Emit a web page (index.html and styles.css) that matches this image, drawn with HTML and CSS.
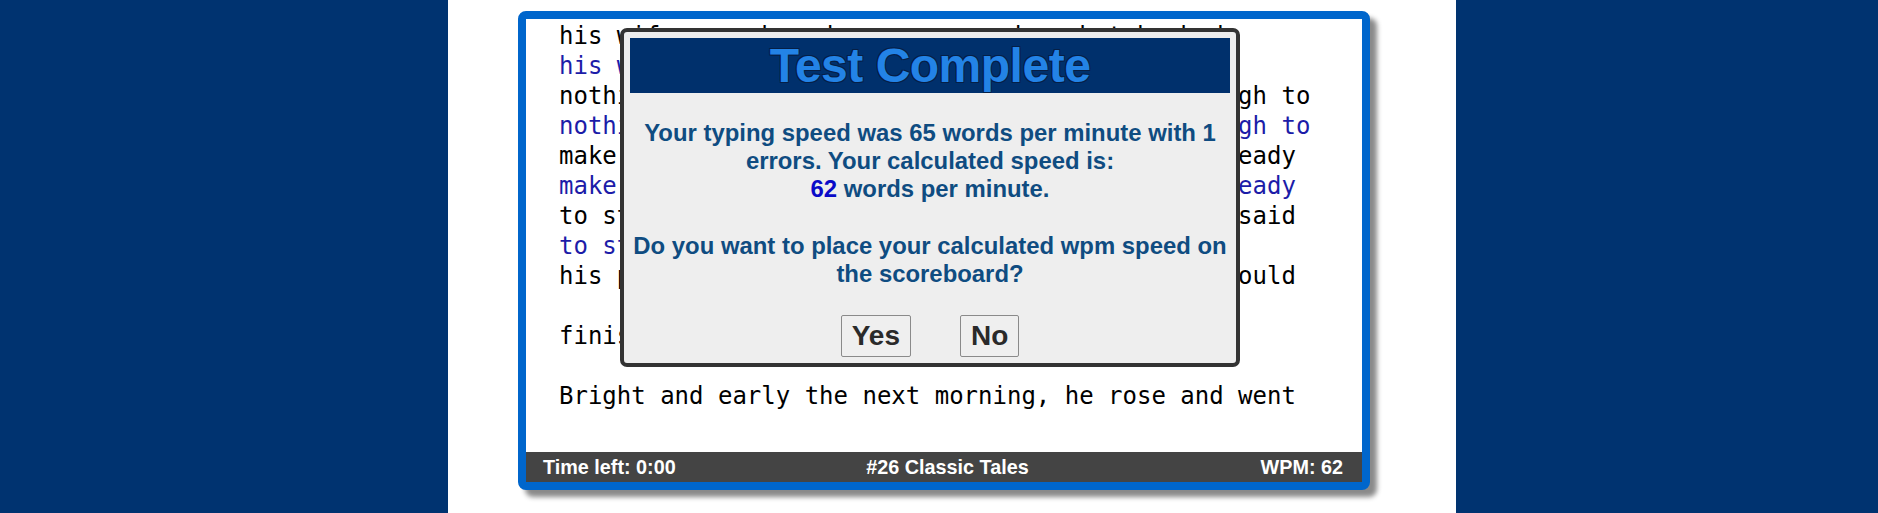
FILE: index.html
```html
<!DOCTYPE html>
<html>
<head>
<meta charset="utf-8">
<title>Typing Test</title>
<link rel="stylesheet" href="styles.css">
</head>
<body>
<div class="column">
  <div class="frame">
    <div class="text">
      <div class="line">his wife grew bored, our money done but he had</div>
      <div class="line typed">his wife grew bored, our money done but he had</div>
      <div class="line">nothing left but a small piece of leather, enough to</div>
      <div class="line typed">nothing left but a small piece of leather, enough to</div>
      <div class="line">make one pair of shoes. He cut them out to be ready</div>
      <div class="line typed">make one pair of shoes. He cut them out to be ready</div>
      <div class="line">to start work on the next morning. At night he said</div>
      <div class="line typed">to start work on the next morning. At</div>
      <div class="line">his prayers and went to sleep, hoping that he would</div>
      <div class="line typed"></div>
      <div class="line">finish the shoes the next day.</div>
      <div class="line typed"></div>
      <div class="line">Bright and early the next morning, he rose and went</div>
      <div class="line typed"></div>
    </div>
    <div class="status">
      <span class="status-left">Time left: 0:00</span>
      <span class="status-mid">#26 Classic Tales</span>
      <span class="status-right">WPM: 62</span>
    </div>
    <div class="modal">
      <h1 class="modal-title">Test Complete</h1>
      <div class="modal-body">
        Your typing speed was 65 words per minute with 1<br>
        errors. Your calculated speed is:<br>
        <span class="speed">62</span> words per minute.<br>
        <br>
        Do you want to place your calculated wpm speed on<br>
        the scoreboard?
      </div>
      <div class="modal-buttons">
        <button class="btn">Yes</button>
        <button class="btn">No</button>
      </div>
    </div>
  </div>
</div>
</body>
</html>
```

FILE: styles.css
```css
html, body {
  margin: 0;
  padding: 0;
}
body {
  background: #003370;
  font-family: "Liberation Sans", Arial, sans-serif;
}
.column {
  margin-left: 448px;
  width: 1008px;
  height: 513px;
  background: #ffffff;
  padding-top: 11px;
  box-sizing: border-box;
}
.frame {
  position: relative;
  margin-left: 70px;
  width: 852px;
  box-sizing: border-box;
  border: 8px solid #0066cc;
  border-radius: 8px;
  background: #ffffff;
  box-shadow: 7px 7px 5px #8a8a8a;
}
.text {
  height: 433px;
  padding: 2px 0 0 33px;
  box-sizing: border-box;
  overflow: hidden;
  font-family: "DejaVu Sans Mono", monospace;
  font-size: 24px;
  line-height: 30px;
  color: #000000;
}
.line {
  height: 30px;
  white-space: pre;
}
.typed {
  color: #1c1ca8;
}
.status {
  display: grid;
  grid-template-columns: 1fr auto 1fr;
  align-items: center;
  height: 30px;
  padding: 0 19px 0 17px;
  background: #444444;
  color: #ffffff;
  font-weight: bold;
  font-size: 19.8px;
  line-height: 30px;
}
.status-left {
  text-align: left;
}
.status-mid {
  text-align: center;
  padding-left: 9px;
}
.status-right {
  text-align: right;
}
.modal {
  position: absolute;
  left: 94px;
  top: 9px;
  width: 620px;
  box-sizing: border-box;
  border: 4px solid #333333;
  border-radius: 7px;
  background: #eeeeee;
  padding: 6px;
}
.modal-title {
  margin: 0;
  height: 55px;
  background: #00306c;
  color: #2383e6;
  font-size: 48px;
  letter-spacing: -0.5px;
  line-height: 55px;
  font-weight: bold;
  text-align: center;
  text-shadow: -1px -1px 0 #061f45, 1px -1px 0 #061f45, -1px 1px 0 #061f45, 1px 1px 0 #061f45;
}
.modal-body {
  margin-top: 26px;
  text-align: center;
  color: #0f4c81;
  font-weight: bold;
  font-size: 23.9px;
  line-height: 28.2px;
  white-space: nowrap;
}
.speed {
  color: #0a0ac8;
}
.modal-buttons {
  display: flex;
  justify-content: center;
  gap: 49px;
  margin-top: 27px;
}
.btn {
  height: 42px;
  padding: 0 10px;
  margin: 0;
  border: 1px solid #8a8a8a;
  border-radius: 2px;
  background: #efefef;
  color: #2a2a2a;
  font-family: "Liberation Sans", Arial, sans-serif;
  font-weight: bold;
  font-size: 28px;
  line-height: 40px;
}
```
